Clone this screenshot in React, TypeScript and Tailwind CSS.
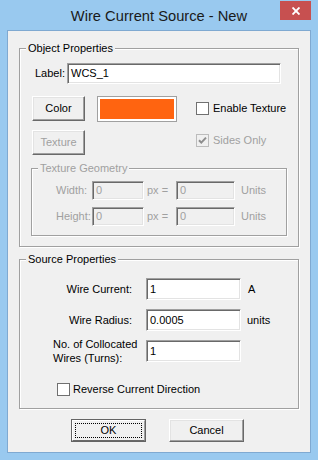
import React from "react";

type BoxProps = {
  className?: string;
  children?: React.ReactNode;
};

// classic raised push button
const Button = ({
  className = "",
  children,
  disabled,
}: BoxProps & { disabled?: boolean }) => (
  <div
    className={`flex items-center justify-center bg-[#f0f0f0] border border-t-white border-l-white border-b-[#696969] border-r-[#696969] shadow-[inset_-1px_-1px_0_#a0a0a0,inset_1px_1px_0_#e3e3e3] ${
      disabled ? "text-[#a0a0a0]" : "text-black"
    } ${className}`}
  >
    {children}
  </div>
);

// default button: dark frame + dotted focus rect
const DefaultButton = ({ className = "", children }: BoxProps) => (
  <div className={`border border-[#646464] flex ${className}`}>
    <div className="flex-1 flex p-[2px] bg-[#f0f0f0] border border-t-white border-l-white border-b-[#696969] border-r-[#a0a0a0]">
      <div className="flex-1 flex items-center justify-center border border-dotted border-black">
        {children}
      </div>
    </div>
  </div>
);

// sunken edit box
const Field = ({
  className = "",
  children,
  disabled,
}: BoxProps & { disabled?: boolean }) => (
  <div
    className={`flex items-center pl-[3px] border border-t-[#a0a0a0] border-l-[#a0a0a0] border-b-white border-r-white shadow-[inset_1px_1px_0_#696969,inset_-1px_-1px_0_#e3e3e3] ${
      disabled ? "bg-[#f0f0f0] text-[#a0a0a0]" : "bg-white text-black"
    } ${className}`}
  >
    {children}
  </div>
);

const CheckBox = ({
  checked,
  disabled,
  className = "",
}: {
  checked?: boolean;
  disabled?: boolean;
  className?: string;
}) => (
  <div
    className={`w-[13px] h-[13px] shrink-0 border flex items-center justify-center ${
      disabled
        ? "border-[#bcbcbc] bg-[#f0f0f0]"
        : "border-[#707070] bg-white"
    } ${className}`}
  >
    {checked && (
      <svg width="11" height="11" viewBox="0 0 11 11">
        <path
          d="M2 5.2 L4.3 7.6 L9 2.6"
          fill="none"
          stroke={disabled ? "#8d8d8d" : "#000"}
          strokeWidth="2"
        />
      </svg>
    )}
  </div>
);

// etched group box, caption sits on the top line
const Group = ({
  title,
  className = "",
  children,
  disabled,
}: BoxProps & { title: string; disabled?: boolean }) => (
  <div
    className={`border border-[#a0a0a0] shadow-[1px_1px_0_#fff,inset_1px_1px_0_#fff] ${className}`}
  >
    <div
      className={`w-fit -mt-[7px] ml-[6px] px-[2px] leading-[13px] bg-[#f0f0f0] ${
        disabled ? "text-[#a0a0a0]" : "text-black"
      }`}
    >
      {title}
    </div>
    {children}
  </div>
);

export default function App() {
  return (
    <div className="w-[318px] h-[460px] bg-[#99c9ef] flex flex-col px-[7px] pb-[7px] font-['Liberation_Sans',Arial,sans-serif] text-[11px] leading-[13px] text-black select-none">
      {/* title bar */}
      <div className="h-[30px] relative flex items-center justify-center">
        <span className="text-[14.7px] leading-[18px] mt-[1px] text-[#1a1a1a]">
          Wire Current Source - New
        </span>
        <div className="absolute right-0 top-[1px] w-[31px] h-[19px] bg-[#c75050] flex items-center justify-center">
          <svg width="8" height="8" viewBox="0 0 8 8">
            <path d="M0.5 0.5 L7.5 7.5 M7.5 0.5 L0.5 7.5" stroke="#fff" strokeWidth="1.9" />
          </svg>
        </div>
      </div>

      {/* client area */}
      <div className="flex-1 border border-[#7fa9d1] bg-[#f0f0f0] flex flex-col pl-[11px] pt-[17px]">
        <Group title="Object Properties" className="w-[280px] pb-[10px]">
          <div className="flex items-center mt-[8px] h-[21px]">
            <span className="ml-[15px] w-[32px]">Label:</span>
            <Field className="w-[214px] h-[21px]">WCS_1</Field>
          </div>

          <div className="flex items-start mt-[12px]">
            <Button className="ml-[12px] w-[53px] h-[25px]">Color</Button>
            <div className="ml-[12px] w-[80px] h-[26px] border border-[#a0a0a0] p-[2px] bg-white">
              <div className="h-full bg-[#ff6410]" />
            </div>
            <div className="flex items-center mt-[6px] ml-[19px]">
              <CheckBox />
              <span className="ml-[4px]">Enable Texture</span>
            </div>
          </div>

          <div className="flex items-start mt-[8px]">
            <Button disabled className="ml-[12px] w-[53px] h-[25px]">
              Texture
            </Button>
            <div className="flex items-center mt-[4px] ml-[111px] text-[#a0a0a0]">
              <CheckBox checked disabled />
              <span className="ml-[4px]">Sides Only</span>
            </div>
          </div>

          <Group
            title="Texture Geometry"
            disabled
            className="ml-[11px] mt-[13px] w-[256px] pb-[9px] text-[#a0a0a0]"
          >
            <div className="flex items-center mt-[6px] h-[19px]">
              <span className="ml-[24px] w-[36px]">Width:</span>
              <Field disabled className="w-[52px] h-[19px]">0</Field>
              <span className="w-[32px] pl-[3px]">px =</span>
              <Field disabled className="w-[59px] h-[19px]">0</Field>
              <span className="ml-[6px]">Units</span>
            </div>
            <div className="flex items-center mt-[7px] h-[19px]">
              <span className="ml-[24px] w-[36px]">Height:</span>
              <Field disabled className="w-[52px] h-[19px]">0</Field>
              <span className="w-[32px] pl-[3px]">px =</span>
              <Field disabled className="w-[59px] h-[19px]">0</Field>
              <span className="ml-[6px]">Units</span>
            </div>
          </Group>
        </Group>

        <Group title="Source Properties" className="w-[280px] mt-[12px] pb-[12px]">
          <div className="flex items-center mt-[12px] h-[22px]">
            <span className="w-[126px] pr-[14px] text-right">Wire Current:</span>
            <Field className="w-[95px] h-[22px]">1</Field>
            <span className="ml-[7px]">A</span>
          </div>
          <div className="flex items-center mt-[9px] h-[22px]">
            <span className="w-[126px] pr-[14px] text-right">Wire Radius:</span>
            <Field className="w-[95px] h-[22px]">0.0005</Field>
            <span className="ml-[6px]">units</span>
          </div>
          <div className="flex items-center mt-[9px] h-[22px]">
            <span className="ml-[33px] w-[93px] leading-[14px]">
              No. of Collocated
              <br />
              Wires (Turns):
            </span>
            <Field className="w-[95px] h-[22px]">1</Field>
          </div>
          <div className="flex items-center mt-[21px]">
            <CheckBox className="ml-[37px]" />
            <span className="ml-[3px]">Reverse Current Direction</span>
          </div>
        </Group>

        <div className="flex mt-[10px]">
          <DefaultButton className="ml-[52px] w-[75px] h-[23px]">OK</DefaultButton>
          <Button className="ml-[23px] w-[75px] h-[23px]">Cancel</Button>
        </div>
      </div>
    </div>
  );
}
